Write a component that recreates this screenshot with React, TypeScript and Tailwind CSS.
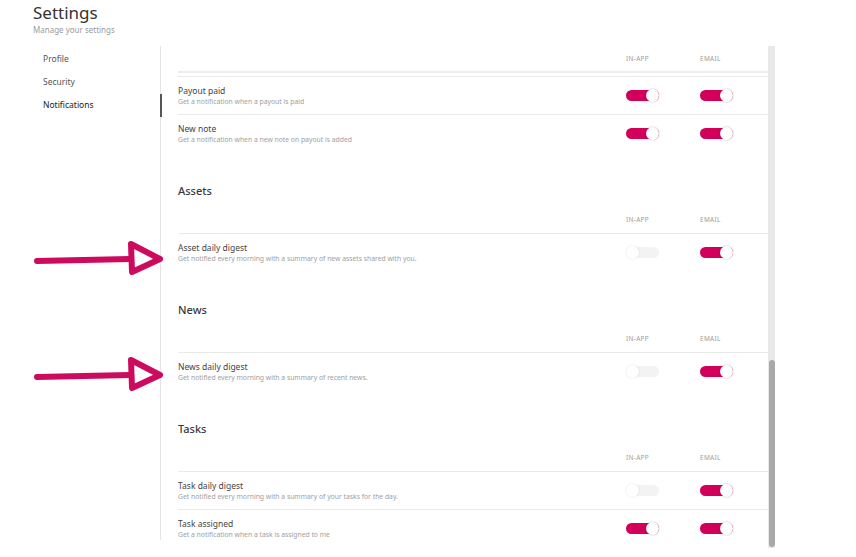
import React from "react";

type Row = { title: string; desc: string; inApp: boolean; email: boolean };

const sections: { name: string | null; rows: Row[] }[] = [
  {
    name: null,
    rows: [
      { title: "Payout paid", desc: "Get a notification when a payout is paid", inApp: true, email: true },
      { title: "New note", desc: "Get a notification when a new note on payout is added", inApp: true, email: true },
    ],
  },
  {
    name: "Assets",
    rows: [
      {
        title: "Asset daily digest",
        desc: "Get notified every morning with a summary of new assets shared with you.",
        inApp: false,
        email: true,
      },
    ],
  },
  {
    name: "News",
    rows: [
      {
        title: "News daily digest",
        desc: "Get notified every morning with a summary of recent news.",
        inApp: false,
        email: true,
      },
    ],
  },
  {
    name: "Tasks",
    rows: [
      {
        title: "Task daily digest",
        desc: "Get notified every morning with a summary of your tasks for the day.",
        inApp: false,
        email: true,
      },
      { title: "Task assigned", desc: "Get a notification when a task is assigned to me", inApp: true, email: true },
    ],
  },
];

const Toggle = ({ on }: { on: boolean }) => {
  if (on) {
    return (
      <div className="flex items-center w-[33px] h-[11px] rounded-full bg-[#d3005b] justify-end">
        <div className="w-[13px] h-[13px] rounded-full bg-white shadow-[0_0_2px_rgba(0,0,0,0.3)]" />
      </div>
    );
  }
  return (
    <div className="flex items-center w-[33px] h-[11px] rounded-full bg-[#f3f3f3]">
      <div className="w-[13px] h-[13px] rounded-full bg-white shadow-[0_0_2px_rgba(0,0,0,0.12)]" />
    </div>
  );
};

const TableHeader = ({ top }: { top: boolean }) => (
  <div
    className={
      top
        ? "flex items-center h-[27px] border-b-2 border-[#eeeeee]"
        : "flex items-center h-[26px] mt-[9px]"
    }
  >
    <div className="flex-1" />
    <div className="w-[74px] text-[6.5px] tracking-[0.3px] text-[#9d9d9d]">IN-APP</div>
    <div className="w-[68px] text-[6.5px] tracking-[0.3px] text-[#9d9d9d]">EMAIL</div>
  </div>
);

const SettingRow = ({ row }: { row: Row }) => (
  <div className="flex h-[38px] border-t border-[#eaeaea]">
    <div className="flex-1 pt-[8px]">
      <div className="text-[8.5px] leading-[11px] text-[#444]">{row.title}</div>
      <div className="text-[6.8px] leading-[11px] text-[#a0a0a0]">{row.desc}</div>
    </div>
    <div className="w-[74px] flex items-center">
      <Toggle on={row.inApp} />
    </div>
    <div className="w-[68px] flex items-center">
      <Toggle on={row.email} />
    </div>
  </div>
);

const Arrow = ({ y }: { y: number }) => (
  <g stroke="#cc0a5e" strokeWidth={6} strokeLinecap="round" strokeLinejoin="round">
    <line x1={37} y1={y + 2} x2={130} y2={y} />
    <polygon points={`131,${y - 15} 160,${y} 132,${y + 13}`} fill="white" />
  </g>
);

export default function App() {
  const nav = ["Profile", "Security", "Notifications"];
  return (
    <div className="relative w-[856px] h-[557px] bg-white overflow-hidden font-['Noto_Sans','Open_Sans',sans-serif]">
      <div className="pl-[33px] pt-[1px]">
        <h1 className="text-[17px] leading-[24px] text-[#333]">Settings</h1>
        <p className="text-[8px] leading-[10px] text-[#9b9b9b]">Manage your settings</p>
      </div>

      <div className="flex mt-[11px]">
        <nav className="w-[160px] pt-[2px]">
          {nav.map((item) => (
            <div
              key={item}
              className={
                item === "Notifications"
                  ? "relative flex items-center h-[23px] pl-[43px] text-[8.5px] text-[#222]"
                  : "relative flex items-center h-[23px] pl-[43px] text-[8.5px] text-[#555]"
              }
            >
              {item}
              {item === "Notifications" && (
                <span className="absolute right-[-2px] top-0 h-full w-[2px] bg-[#555]" />
              )}
            </div>
          ))}
        </nav>
        <div className="w-px h-[494px] bg-[#e4e4e4]" />

        <main className="w-[607px] h-[494px] overflow-hidden pl-[17px]">
          {sections.map((s, i) => (
            <div key={i} className={s.name ? "pt-[32px]" : ""}>
              {s.name && (
                <h2 className="text-[11px] leading-[14px] font-medium text-[#3a3a3a]">{s.name}</h2>
              )}
              <TableHeader top={!s.name} />
              {!s.name && <div className="h-[3px]" />}
              {s.rows.map((r) => (
                <SettingRow key={r.title} row={r} />
              ))}
            </div>
          ))}
        </main>

        <div className="w-[7px] h-[502px] bg-[#e9e9e9]">
          <div className="mt-[314px] ml-[1px] w-[6px] h-[187px] rounded-full bg-[#a9a9a9]" />
        </div>
      </div>

      <svg className="absolute left-0 top-0 pointer-events-none" width={856} height={557}>
        <Arrow y={259} />
        <Arrow y={375} />
      </svg>
    </div>
  );
}
